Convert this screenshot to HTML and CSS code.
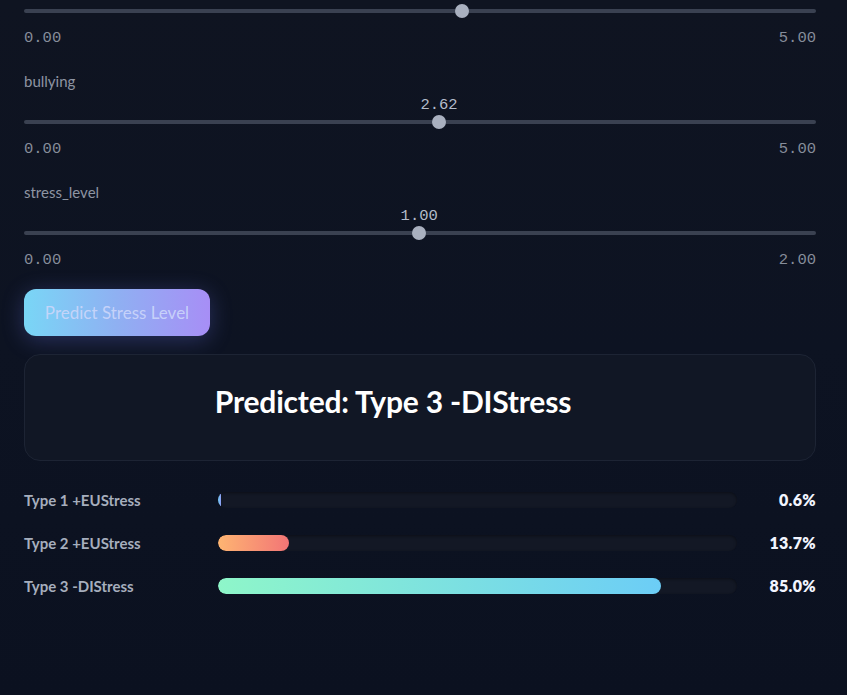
FILE: index.html
```html
<!DOCTYPE html>
<html lang="en">
<head>
<meta charset="utf-8">
<title>Stress Level Predictor</title>
<link rel="stylesheet" href="styles.css">
</head>
<body>
<main class="page">
  <section class="slider slider-partial">
    <div class="track-row">
      <div class="track"><span class="thumb" style="left: 55.3%"></span></div>
    </div>
    <div class="minmax"><span>0.00</span><span>5.00</span></div>
  </section>

  <section class="slider">
    <div class="slider-label">bullying</div>
    <div class="value-row"><span class="value" style="left: 52.4%">2.62</span></div>
    <div class="track-row">
      <div class="track"><span class="thumb" style="left: 52.4%"></span></div>
    </div>
    <div class="minmax"><span>0.00</span><span>5.00</span></div>
  </section>

  <section class="slider">
    <div class="slider-label">stress_level</div>
    <div class="value-row"><span class="value" style="left: 49.9%">1.00</span></div>
    <div class="track-row">
      <div class="track"><span class="thumb" style="left: 49.9%"></span></div>
    </div>
    <div class="minmax"><span>0.00</span><span>2.00</span></div>
  </section>

  <button class="predict-btn" type="button">Predict Stress Level</button>

  <div class="result-card">
    <h2 class="result-title">Predicted: Type 3 -DIStress</h2>
  </div>

  <div class="probs">
    <div class="prob-row">
      <span class="prob-label">Type 1 +EUStress</span>
      <div class="bar-track"><div class="bar bar-1" style="width: 0.6%"></div></div>
      <span class="prob-value">0.6%</span>
    </div>
    <div class="prob-row">
      <span class="prob-label">Type 2 +EUStress</span>
      <div class="bar-track"><div class="bar bar-2" style="width: 13.7%"></div></div>
      <span class="prob-value">13.7%</span>
    </div>
    <div class="prob-row">
      <span class="prob-label">Type 3 -DIStress</span>
      <div class="bar-track"><div class="bar bar-3" style="width: 85.3%"></div></div>
      <span class="prob-value">85.0%</span>
    </div>
  </div>
</main>
</body>
</html>
```

FILE: styles.css
```css
html, body {
  margin: 0;
  padding: 0;
}

body {
  background: linear-gradient(180deg, #0f1421 0%, #0d1322 50%, #0b1120 100%);
  min-height: 695px;
  font-family: "Lato", "Open Sans", sans-serif;
  color: #e6e9f0;
}

.page {
  padding: 3px 31px 40px 24px;
  display: flex;
  flex-direction: column;
}

.slider {
  display: flex;
  flex-direction: column;
  margin-bottom: 23px;
}

.slider-label {
  font-size: 15px;
  line-height: 20px;
  height: 20px;
  color: #8e95a3;
}

.value-row {
  position: relative;
  height: 20px;
  margin-top: 4px;
}

.value {
  position: absolute;
  top: 0;
  transform: translateX(-50%);
  font-family: "Liberation Mono", "DejaVu Sans Mono", monospace;
  font-size: 15.5px;
  line-height: 20px;
  color: #b4bccb;
}

.track-row {
  height: 16px;
  display: flex;
  align-items: center;
  margin-top: -1px;
}

.track {
  position: relative;
  flex: 1;
  height: 4px;
  border-radius: 2px;
  background: #3a4151;
}

.thumb {
  position: absolute;
  top: 50%;
  width: 14px;
  height: 14px;
  border-radius: 50%;
  background: #a9b0bf;
  transform: translate(-50%, -50%);
}

.slider-partial .track-row {
  margin-top: 0;
}

.minmax {
  display: flex;
  justify-content: space-between;
  margin-top: 9px;
  height: 20px;
  font-family: "Liberation Mono", "DejaVu Sans Mono", monospace;
  font-size: 15.5px;
  line-height: 20px;
  color: #868d9a;
}

.predict-btn {
  align-self: flex-start;
  width: 186px;
  height: 47px;
  margin-top: -4px;
  border: none;
  border-radius: 12px;
  background: linear-gradient(90deg, #79d6f6 0%, #8fb0f2 50%, #a78ef6 100%);
  box-shadow: 0 4px 22px rgba(120, 130, 255, 0.28);
  color: rgba(205, 215, 250, 0.9);
  font-family: "Lato", "Open Sans", sans-serif;
  font-size: 17px;
  padding: 0;
  cursor: pointer;
}

.result-card {
  margin-top: 18px;
  height: 105px;
  border: 1px solid #1d2434;
  border-radius: 16px;
  background: #111725;
  display: flex;
  align-items: center;
  justify-content: center;
}

.result-title {
  margin: 0 0 14px 0;
  padding-right: 54px;
  font-size: 30px;
  font-weight: 700;
  color: #ffffff;
  letter-spacing: -0.2px;
}

.probs {
  margin-top: 29px;
  display: flex;
  flex-direction: column;
  gap: 27px;
}

.prob-row {
  display: grid;
  grid-template-columns: 194px 1fr 79px;
  align-items: center;
  height: 16px;
}

.prob-label {
  font-size: 15px;
  font-weight: 700;
  color: #a6aebd;
}

.bar-track {
  height: 16px;
  border-radius: 8px;
  background: #131825;
  box-shadow: inset 0 1px 3px rgba(0, 0, 0, 0.4);
  overflow: hidden;
}

.bar {
  height: 100%;
  border-radius: 8px;
}

.bar-1 {
  min-width: 3px;
  background: linear-gradient(90deg, #6fcff6, #8f9bf3);
}

.bar-2 {
  background: linear-gradient(90deg, #feb572, #f27576);
}

.bar-3 {
  background: linear-gradient(90deg, #8ef6c9, #6ccdf6);
}

.prob-value {
  text-align: right;
  font-size: 16px;
  font-weight: 800;
  letter-spacing: 0.3px;
  color: #f2f5ff;
}
```
